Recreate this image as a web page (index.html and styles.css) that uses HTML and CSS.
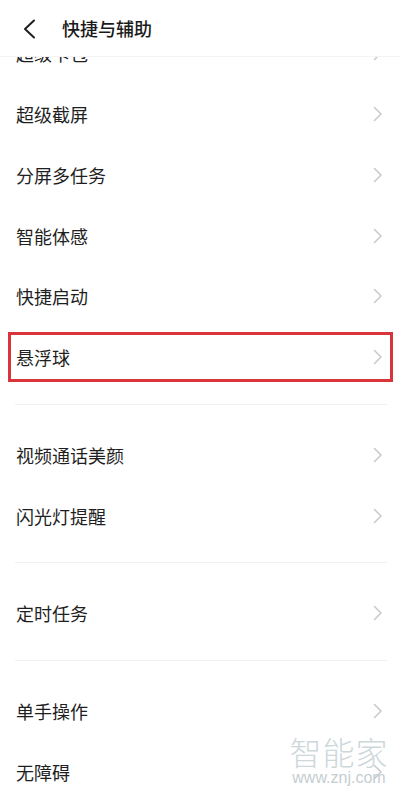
FILE: index.html
```html
<!DOCTYPE html>
<html lang="zh-CN">
<head>
<meta charset="utf-8">
<title>快捷与辅助</title>
<link rel="stylesheet" href="styles.css">
</head>
<body>
<div class="screen">
  <header class="header">
    <svg class="back" width="14" height="20" viewBox="0 0 14 20"><path d="M12 1.5 L3 10 L12 18.5" fill="none" stroke="#1f1f1f" stroke-width="2" stroke-linecap="round" stroke-linejoin="round"/></svg>
    <h1 class="title">快捷与辅助</h1>
  </header>
  <div class="viewport">
    <div class="list">
      <div class="group">
        <div class="row"><span class="label">超级卡包</span><svg class="chev" width="10" height="16" viewBox="0 0 10 16"><path d="M1.5 1.5 L8 8 L1.5 14.5" fill="none" stroke="#c9c9c9" stroke-width="1.5" stroke-linecap="round" stroke-linejoin="round"/></svg></div>
        <div class="row"><span class="label">超级截屏</span><svg class="chev" width="10" height="16" viewBox="0 0 10 16"><path d="M1.5 1.5 L8 8 L1.5 14.5" fill="none" stroke="#c9c9c9" stroke-width="1.5" stroke-linecap="round" stroke-linejoin="round"/></svg></div>
        <div class="row"><span class="label">分屏多任务</span><svg class="chev" width="10" height="16" viewBox="0 0 10 16"><path d="M1.5 1.5 L8 8 L1.5 14.5" fill="none" stroke="#c9c9c9" stroke-width="1.5" stroke-linecap="round" stroke-linejoin="round"/></svg></div>
        <div class="row"><span class="label">智能体感</span><svg class="chev" width="10" height="16" viewBox="0 0 10 16"><path d="M1.5 1.5 L8 8 L1.5 14.5" fill="none" stroke="#c9c9c9" stroke-width="1.5" stroke-linecap="round" stroke-linejoin="round"/></svg></div>
        <div class="row"><span class="label">快捷启动</span><svg class="chev" width="10" height="16" viewBox="0 0 10 16"><path d="M1.5 1.5 L8 8 L1.5 14.5" fill="none" stroke="#c9c9c9" stroke-width="1.5" stroke-linecap="round" stroke-linejoin="round"/></svg></div>
        <div class="row highlight"><span class="label">悬浮球</span><svg class="chev" width="10" height="16" viewBox="0 0 10 16"><path d="M1.5 1.5 L8 8 L1.5 14.5" fill="none" stroke="#c9c9c9" stroke-width="1.5" stroke-linecap="round" stroke-linejoin="round"/></svg></div>
      </div>
      <div class="sep"></div>
      <div class="group">
        <div class="row"><span class="label">视频通话美颜</span><svg class="chev" width="10" height="16" viewBox="0 0 10 16"><path d="M1.5 1.5 L8 8 L1.5 14.5" fill="none" stroke="#c9c9c9" stroke-width="1.5" stroke-linecap="round" stroke-linejoin="round"/></svg></div>
        <div class="row"><span class="label">闪光灯提醒</span><svg class="chev" width="10" height="16" viewBox="0 0 10 16"><path d="M1.5 1.5 L8 8 L1.5 14.5" fill="none" stroke="#c9c9c9" stroke-width="1.5" stroke-linecap="round" stroke-linejoin="round"/></svg></div>
      </div>
      <div class="sep"></div>
      <div class="group">
        <div class="row"><span class="label">定时任务</span><svg class="chev" width="10" height="16" viewBox="0 0 10 16"><path d="M1.5 1.5 L8 8 L1.5 14.5" fill="none" stroke="#c9c9c9" stroke-width="1.5" stroke-linecap="round" stroke-linejoin="round"/></svg></div>
      </div>
      <div class="sep"></div>
      <div class="group">
        <div class="row"><span class="label">单手操作</span><svg class="chev" width="10" height="16" viewBox="0 0 10 16"><path d="M1.5 1.5 L8 8 L1.5 14.5" fill="none" stroke="#c9c9c9" stroke-width="1.5" stroke-linecap="round" stroke-linejoin="round"/></svg></div>
        <div class="row"><span class="label">无障碍</span><svg class="chev" width="10" height="16" viewBox="0 0 10 16"><path d="M1.5 1.5 L8 8 L1.5 14.5" fill="none" stroke="#c9c9c9" stroke-width="1.5" stroke-linecap="round" stroke-linejoin="round"/></svg></div>
      </div>
    </div>
  </div>
  <div class="watermark">
    <div class="wm-cn">智能家</div>
    <div class="wm-en">www.znj.com</div>
  </div>
</div>
</body>
</html>
```
FILE: styles.css
```css
* { box-sizing: border-box; }
html, body { margin: 0; padding: 0; background: #fff; }
body {
  font-family: "Noto Sans CJK SC", "Noto Sans", sans-serif;
  color: #1f1f1f;
}
.screen {
  position: relative;
  width: 400px;
  height: 797px;
  overflow: hidden;
  display: flex;
  flex-direction: column;
  background: #fff;
}
.header {
  flex: none;
  height: 57px;
  display: flex;
  align-items: center;
  padding-left: 22px;
  border-bottom: 1px solid #f3f3f3;
  background: #fff;
  position: relative;
  z-index: 2;
}
.back { display: block; margin-top: 1px; }
.title {
  margin: 0 0 0 26px;
  font-size: 18px;
  font-weight: 500;
  line-height: 1;
  color: #1a1a1a;
}
.viewport {
  flex: 1;
  overflow: hidden;
}
.list {
  margin-top: -34px;
}
.row {
  position: relative;
  height: 60.75px;
  display: flex;
  align-items: center;
  justify-content: space-between;
  padding: 0 17px 0 16px;
}
.label {
  font-size: 18px;
  line-height: 1;
  color: #1f1f1f;
}
.chev { display: block; }
.highlight::after {
  content: "";
  position: absolute;
  left: 8px;
  right: 7px;
  top: 5px;
  bottom: 6px;
  border: 3px solid #d8343c;
  pointer-events: none;
}
.sep {
  margin: 16px 13px 20px 15px;
  height: 1px;
  background: #f0f0f0;
}
.watermark {
  position: absolute;
  left: 288px;
  top: 733px;
  width: 102px;
  display: flex;
  flex-direction: column;
  align-items: center;
  pointer-events: none;
}
.wm-cn {
  font-size: 32px;
  line-height: 36px;
  font-weight: 300;
  color: #cdd8db;
  letter-spacing: 1px;
}
.wm-en {
  font-family: "Liberation Sans", Arial, sans-serif;
  font-size: 16px;
  line-height: 18px;
  color: #c4ced1;
}
```
